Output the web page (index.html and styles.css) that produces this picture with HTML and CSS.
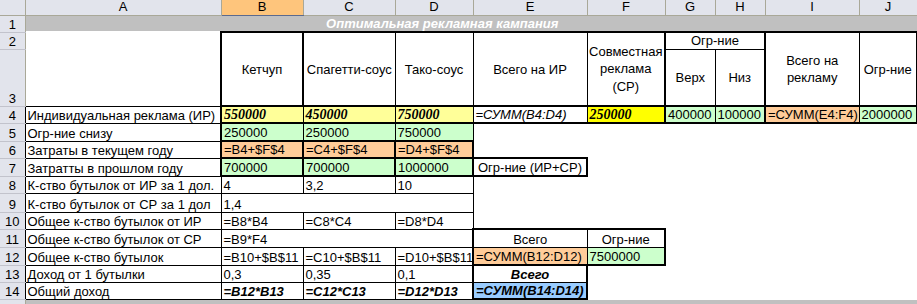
FILE: index.html
```html
<!DOCTYPE html>
<html lang="ru">
<head>
<meta charset="utf-8">
<title>Оптимальная рекламная кампания</title>
<link rel="stylesheet" href="styles.css">
</head>
<body>
<table class="sheet">
  <colgroup>
    <col class="c-rn"><col class="c-a"><col class="c-b"><col class="c-c"><col class="c-d"><col class="c-e"><col class="c-f"><col class="c-g"><col class="c-h"><col class="c-i"><col class="c-j">
  </colgroup>
  <tr class="r-hdr">
    <th class="corner"></th><th class="ch">A</th><th class="ch sel">B</th><th class="ch">C</th><th class="ch">D</th><th class="ch">E</th><th class="ch">F</th><th class="ch">G</th><th class="ch">H</th><th class="ch">I</th><th class="ch">J</th>
  </tr>
  <tr class="r-17">
    <th class="rh">1</th>
    <td colspan="9" class="title">Оптимальная рекламная кампания</td>
    <td class="gray"></td>
  </tr>
  <tr class="r-17">
    <th class="rh">2</th>
    <td rowspan="2"></td>
    <td rowspan="2" class="hd box t2 l2 r2 b2">Кетчуп</td>
    <td rowspan="2" class="hd box t2 b2">Спагетти-соус</td>
    <td rowspan="2" class="hd box t2 b2">Тако-соус</td>
    <td rowspan="2" class="hd box t2 b2">Всего на ИР</td>
    <td rowspan="2" class="hd wrap box t2 b2 r2">Совместная<br>реклама<br>(СР)</td>
    <td colspan="2" class="hd box t2 l2 r2">Огр-ние</td>
    <td rowspan="2" class="hd wrap box t2 b2 l2">Всего на<br>рекламу</td>
    <td rowspan="2" class="hd box t2 b2 r2">Огр-ние</td>
  </tr>
  <tr class="r-57">
    <th class="rh">3</th>
    <td class="hd box b2 l2">Верх</td>
    <td class="hd box b2 r2">Низ</td>
  </tr>
  <tr class="r-17">
    <th class="rh k">4</th>
    <td class="box">Индивидуальная реклама (ИР)</td>
    <td class="box l2 b2 ly sbi">550000</td>
    <td class="box b2 ly sbi">450000</td>
    <td class="box b2 ly sbi">750000</td>
    <td class="box b2 it">=СУММ(B4:D4)</td>
    <td class="box b2 r2 yl sbi">250000</td>
    <td class="box b2 gr">400000</td>
    <td class="box b2 r2 gr">100000</td>
    <td class="box b2 pe">=СУММ(E4:F4)</td>
    <td class="box b2 r2 gr">2000000</td>
  </tr>
  <tr class="r-18">
    <th class="rh k">5</th>
    <td class="box">Огр-ние снизу</td>
    <td class="box l2 gr">250000</td>
    <td class="box gr">250000</td>
    <td class="box gr">750000</td>
    <td colspan="6"></td>
  </tr>
  <tr class="r-17">
    <th class="rh k">6</th>
    <td class="box">Затраты в текущем году</td>
    <td class="box t2 l2 r2 b2 pe">=B4+$F$4</td>
    <td class="box t2 r2 b2 pe">=C4+$F$4</td>
    <td class="box t2 r2 b2 pe">=D4+$F$4</td>
    <td colspan="6"></td>
  </tr>
  <tr class="r-18">
    <th class="rh k">7</th>
    <td class="box">Затратты в прошлом году</td>
    <td class="box l2 r2 b2 gr">700000</td>
    <td class="box r2 b2 gr">700000</td>
    <td class="box r2 b2 gr">1000000</td>
    <td class="box t2 r2 b2 ctr">Огр-ние (ИР+СР)</td>
    <td colspan="5"></td>
  </tr>
  <tr class="r-17">
    <th class="rh k">8</th>
    <td class="box">К-ство бутылок от ИР за 1 дол.</td>
    <td class="box">4</td>
    <td class="box">3,2</td>
    <td class="box">10</td>
    <td colspan="6"></td>
  </tr>
  <tr class="r-19">
    <th class="rh k">9</th>
    <td class="box">К-ство бутылок от СР за 1 дол</td>
    <td colspan="3" class="box">1,4</td>
    <td colspan="6"></td>
  </tr>
  <tr class="r-17">
    <th class="rh k">10</th>
    <td class="box">Общее к-ство бутылок от ИР</td>
    <td class="box">=B8*B4</td>
    <td class="box">=C8*C4</td>
    <td class="box">=D8*D4</td>
    <td colspan="6"></td>
  </tr>
  <tr class="r-18">
    <th class="rh k">11</th>
    <td class="box">Общее к-ство бутылок от СР</td>
    <td colspan="3" class="box">=B9*F4</td>
    <td class="box t2 l2 ctr">Всего</td>
    <td class="box t2 r2 ctr">Огр-ние</td>
    <td colspan="4"></td>
  </tr>
  <tr class="r-18">
    <th class="rh k">12</th>
    <td class="box">Общее к-ство бутылок</td>
    <td class="box">=B10+$B$11</td>
    <td class="box">=C10+$B$11</td>
    <td class="box">=D10+$B$11</td>
    <td class="box l2 b2 pe">=СУММ(B12:D12)</td>
    <td class="box r2 b2 gr">7500000</td>
    <td colspan="4"></td>
  </tr>
  <tr class="r-17">
    <th class="rh k">13</th>
    <td class="box">Доход от 1 бутылки</td>
    <td class="box">0,3</td>
    <td class="box">0,35</td>
    <td class="box">0,1</td>
    <td class="box t2 l2 r2 ctr bi">Всего</td>
    <td colspan="5"></td>
  </tr>
  <tr class="r-17">
    <th class="rh k">14</th>
    <td class="box">Общий доход</td>
    <td class="box bi">=B12*B13</td>
    <td class="box bi">=C12*C13</td>
    <td class="box bi">=D12*D13</td>
    <td class="box l2 r2 b2 bl bi">=СУММ(B14:D14)</td>
    <td colspan="5"></td>
  </tr>
  <tr class="r-last">
    <th class="rh"></th>
    <td colspan="10" class="gray"></td>
  </tr>
</table>
</body>
</html>
```

FILE: styles.css
```css
html, body {
  margin: 0;
  padding: 0;
  background: #ffffff;
  overflow: hidden;
}

.sheet {
  border-collapse: collapse;
  table-layout: fixed;
  width: 917px;
  font-family: "Liberation Sans", Arial, sans-serif;
  font-size: 13px;
  color: #000;
}

.c-rn { width: 25px; }
.c-a { width: 196px; }
.c-b { width: 82px; }
.c-c { width: 92px; }
.c-d { width: 78px; }
.c-e { width: 114px; }
.c-f { width: 78px; }
.c-g { width: 50px; }
.c-h { width: 50px; }
.c-i { width: 94px; }
.c-j { width: 58px; }

.r-hdr { height: 15px; }
.r-17 { height: 17px; }
.r-18 { height: 18px; }
.r-19 { height: 19px; }
.r-57 { height: 57px; }
.r-last { height: 5px; }

td {
  padding: 0 2px;
  white-space: nowrap;
  overflow: hidden;
  vertical-align: bottom;
  line-height: 15px;
}

th {
  font-weight: normal;
  padding: 0;
}

.corner,
.ch {
  background: #e2e4ec;
  border-right: 1px solid #a9a898;
  border-bottom: 1px solid #a9a898;
  text-align: center;
  vertical-align: middle;
  line-height: 14px;
}

.ch.sel {
  background: #fec57c;
  border-bottom-color: #5b6a8e;
}

.rh {
  background: #e2e4ec;
  border-right: 1px solid #a9a898;
  border-bottom: 1px solid #c2c3cc;
  text-align: center;
  vertical-align: bottom;
  line-height: 15px;
}

.rh.k { border-right-color: #000; }

.title {
  background: #c0c0c0;
  color: #ffffff;
  font-weight: bold;
  font-style: italic;
  text-align: center;
}

.gray { background: #c0c0c0; }

.hd {
  text-align: center;
  vertical-align: middle;
}

.wrap { line-height: 17.5px; padding: 0; }

.box { border: 1px solid #000; }
.t2 { border-top: 2px solid #000; }
.b2 { border-bottom: 2px solid #000; }
.l2 { border-left: 2px solid #000; }
.r2 { border-right: 2px solid #000; }

.ctr { text-align: center; }

.ly { background: #ffff99; }
.yl { background: #ffff00; }
.gr { background: #ccffcc; }
.pe { background: #ffcc99; }
.bl { background: #99ccff; }

.sbi {
  font-family: "Liberation Serif", "Times New Roman", serif;
  font-weight: bold;
  font-style: italic;
  font-size: 14px;
}

.it { font-style: italic; }

.bi {
  font-weight: bold;
  font-style: italic;
}
```
